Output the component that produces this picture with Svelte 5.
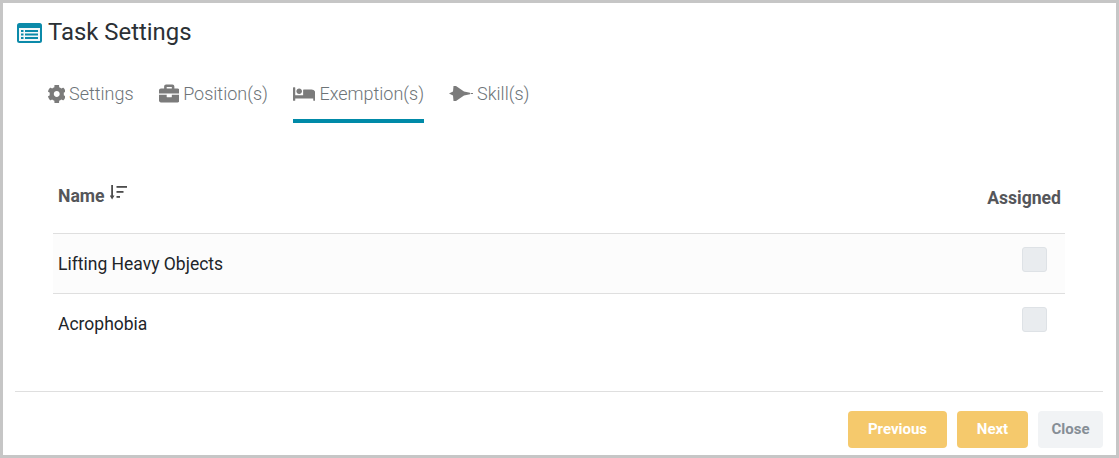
<script lang="ts">
  const tabs = [
    { label: 'Settings', icon: 'cog', active: false },
    { label: 'Position(s)', icon: 'briefcase', active: false },
    { label: 'Exemption(s)', icon: 'bed', active: true },
    { label: 'Skill(s)', icon: 'jet', active: false }
  ];

  const icons: Record<string, { box: string; d: string; w: number; h: number }> = {
    cog: {
      box: '19 14 474 484', w: 17.5, h: 18,
      d: 'M487.4 315.7l-42.6-24.6c4.3-23.2 4.3-47 0-70.2l42.6-24.6c4.9-2.8 7.1-8.6 5.5-14-11.1-35.6-30-67.8-54.7-94.6-3.8-4.1-10-5.1-14.8-2.3L380.8 110c-17.9-15.4-38.5-27.3-60.8-35.1V25.8c0-5.6-3.9-10.5-9.4-11.7-36.7-8.2-74.3-7.8-109.2 0-5.5 1.2-9.4 6.1-9.4 11.7V75c-22.2 7.9-42.8 19.8-60.8 35.1L88.7 85.5c-4.9-2.8-11-1.9-14.8 2.3-24.7 26.7-43.6 58.9-54.7 94.6-1.7 5.4.6 11.2 5.5 14L67.3 221c-4.3 23.2-4.3 47 0 70.2l-42.6 24.6c-4.9 2.8-7.1 8.6-5.5 14 11.1 35.6 30 67.8 54.7 94.6 3.8 4.1 10 5.1 14.8 2.3l42.6-24.6c17.9 15.4 38.5 27.3 60.8 35.1v49.2c0 5.6 3.9 10.5 9.4 11.7 36.7 8.2 74.3 7.8 109.2 0 5.5-1.2 9.4-6.1 9.4-11.7v-49.2c22.2-7.9 42.8-19.8 60.8-35.1l42.6 24.6c4.9 2.8 11 1.9 14.8-2.3 24.7-26.7 43.6-58.9 54.7-94.6 1.5-5.5-.7-11.3-5.6-14.1zM256 336c-44.1 0-80-35.9-80-80s35.9-80 80-80 80 35.9 80 80-35.9 80-80 80z'
    },
    briefcase: {
      box: '0 0 512 512', w: 20.5, h: 21,
      d: 'M320 336c0 8.84-7.16 16-16 16h-96c-8.84 0-16-7.16-16-16v-48H0v144c0 25.6 22.4 48 48 48h416c25.6 0 48-22.4 48-48V288H320v48zm144-208h-80V80c0-25.6-22.4-48-48-48H176c-25.6 0-48 22.4-48 48v48H48c-25.6 0-48 22.4-48 48v80h512v-80c0-25.6-22.4-48-48-48zm-144 0H192V96h128v32z'
    },
    bed: {
      box: '0 0 640 512', w: 22.5, h: 18,
      d: 'M176 256c44.11 0 80-35.89 80-80s-35.89-80-80-80-80 35.89-80 80 35.89 80 80 80zm352-128H304c-8.84 0-16 7.16-16 16v144H64V80c0-8.84-7.16-16-16-16H16C7.16 64 0 71.16 0 80v352c0 8.84 7.16 16 16 16h32c8.84 0 16-7.16 16-16v-48h512v48c0 8.84 7.16 16 16 16h32c8.84 0 16-7.16 16-16V240c0-61.86-50.14-112-112-112z'
    },
    jet: {
      box: '0 0 24 17', w: 24, h: 17,
      d: 'M0 8.500 4 6.500 4.500 1H7L15 6.500 21 7.800V9.200L15 10.500 7 16H4.500L4 10.500ZM21.600 8H24V9H21.600Z'
    }
  };

  const rows = ['Lifting Heavy Objects', 'Acrophobia'];
</script>

<div class="frame">
  <header>
    <svg class="title-icon" width="25" height="20" viewBox="0 0 25 20">
      <rect width="25" height="20" rx="2.5" fill="#0b8aa9" />
      <rect x="2" y="5" width="21" height="13" fill="#f4f8f9" />
      <rect x="4" y="7" width="2.500" height="2" fill="#0b8aa9" />
      <rect x="4" y="10.5" width="2.500" height="2" fill="#0b8aa9" />
      <rect x="4" y="14" width="2.500" height="2" fill="#0b8aa9" />
      <rect x="8" y="7" width="13" height="2" fill="#0b8aa9" />
      <rect x="8" y="10.5" width="13" height="2" fill="#0b8aa9" />
      <rect x="8" y="14" width="13" height="2" fill="#0b8aa9" />
    </svg>
    <h1>Task Settings</h1>
  </header>

  <nav>
    {#each tabs as tab}
      <div class="tab" class:active={tab.active}>
        <svg width={icons[tab.icon].w} height={icons[tab.icon].h} viewBox={icons[tab.icon].box}>
          <path d={icons[tab.icon].d} fill="currentColor" />
        </svg>
        <span>{tab.label}</span>
      </div>
    {/each}
  </nav>

  <div class="table">
    <div class="head">
      <div class="name-head">
        <span>Name</span>
        <svg width="18" height="15" viewBox="0 0 18 15">
          <path d="M1.200 0H3V10.500H4.500L2.100 14.500 -0.300 10.500H1.200Z" fill="#4c4c4c" />
          <rect x="6.500" y="1" width="10.500" height="1.800" fill="#4c4c4c" />
          <rect x="6.500" y="6" width="7" height="1.800" fill="#4c4c4c" />
          <rect x="6.500" y="11" width="3.500" height="1.800" fill="#4c4c4c" />
        </svg>
      </div>
      <div class="assigned-head">Assigned</div>
    </div>
    {#each rows as row, i}
      <div class="row" class:shaded={i === 0}>
        <span>{row}</span>
        <div class="check"></div>
      </div>
    {/each}
  </div>

  <footer>
    <button class="amber prev">Previous</button>
    <button class="amber next">Next</button>
    <button class="close">Close</button>
  </footer>
</div>

<style>
  :global(body) {
    margin: 0;
    background: #fff;
  }

  .frame {
    box-sizing: border-box;
    width: 1119px;
    height: 458px;
    border: 3px solid #c6c6c6;
    background: #fff;
    font-family: Roboto, "Liberation Sans", sans-serif;
    color: #212529;
    display: flex;
    flex-direction: column;
  }

  header {
    display: flex;
    align-items: center;
    gap: 6px;
    padding: 15px 0 0 14px;
    height: 28px;
  }

  .title-icon {
    flex: none;
    margin-top: 1px;
  }

  h1 {
    margin: 0;
    font-size: 23.9px;
    font-weight: 400;
    line-height: 28px;
    color: #2b3035;
  }

  nav {
    display: flex;
    gap: 25px;
    margin-top: 30px;
    padding-left: 44.5px;
  }

  .tab {
    display: flex;
    align-items: center;
    gap: 4px;
    height: 47px;
    box-sizing: border-box;
    border-bottom: 4px solid transparent;
    font-size: 18px;
    font-weight: 300;
    color: #6d7478;
    padding-bottom: 8px;
  }

  .tab.active {
    border-bottom-color: #008aa8;
  }

  .tab svg {
    color: #7b7b7b;
    flex: none;
  }

  .table {
    margin: 0 51px 0 50px;
  }

  .head {
    display: flex;
    justify-content: space-between;
    height: 110px;
    box-sizing: border-box;
    font-size: 17.6px;
    font-weight: 700;
    color: #55565a;
    padding: 0 4px 0 5px;
  }

  .name-head {
    display: flex;
    align-items: flex-start;
    gap: 5px;
    padding-top: 63px;
    line-height: 20px;
  }

  .name-head svg {
    margin-top: -1px;
  }

  .assigned-head {
    padding-top: 65px;
    line-height: 20px;
  }

  .row {
    display: flex;
    justify-content: space-between;
    align-items: flex-start;
    height: 60px;
    box-sizing: border-box;
    border-top: 1px solid #dfdfdf;
    padding: 0 18px 0 5px;
    font-size: 17.5px;
    line-height: 60px;
  }

  .row.shaded {
    background: #fcfcfc;
  }

  .check {
    width: 25px;
    height: 25px;
    margin-top: 13px;
    box-sizing: border-box;
    background: #e9ecef;
    border: 1px solid #dee2e6;
    border-radius: 3px;
  }

  footer {
    margin: 38px 13px 0 12px;
    border-top: 1px solid #dfdfdf;
    padding-top: 19px;
    display: flex;
    justify-content: flex-end;
    gap: 10px;
  }

  button {
    height: 37px;
    border: none;
    border-radius: 4px;
    font-family: inherit;
    font-size: 15px;
    font-weight: 700;
    padding: 0 0 2px;
  }

  .amber {
    background: #f5c96c;
    color: #fff;
  }

  .prev {
    width: 99px;
  }

  .next {
    width: 71px;
  }

  .close {
    width: 65px;
    background: #f1f3f5;
    color: #868e96;
  }
</style>
